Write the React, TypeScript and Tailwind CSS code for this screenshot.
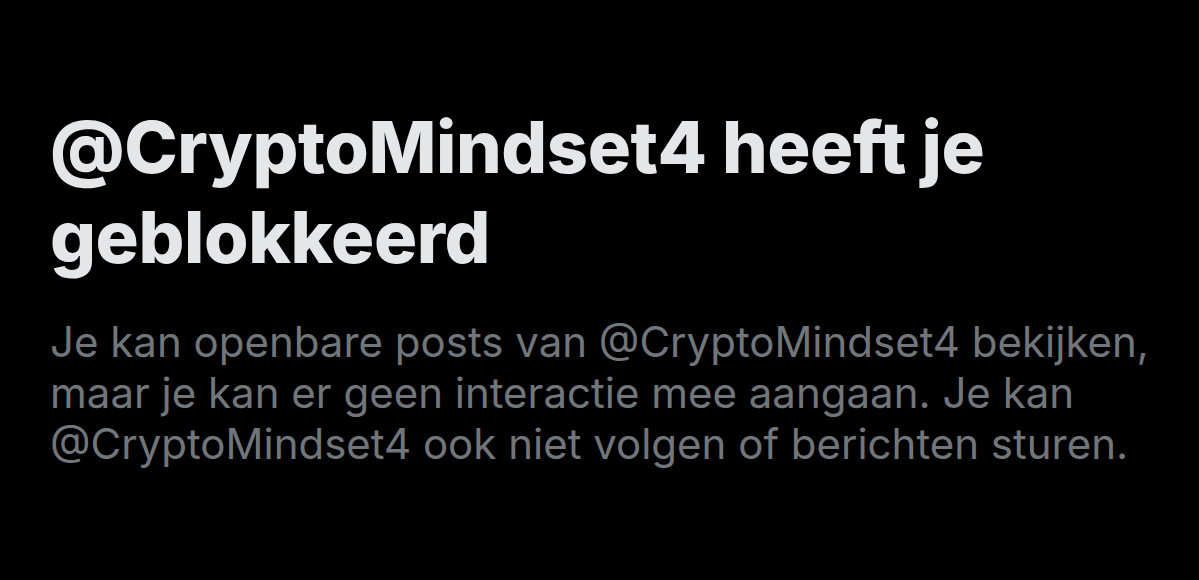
export default function App() {
  return (
    <div className="w-[1199px] h-[580px] bg-black overflow-hidden" style={{ fontFamily: 'Inter, "Liberation Sans", sans-serif' }}>
      <div className="pl-[50px] pt-[102px] w-[1170px]">
        <h1 className="text-[72px] leading-[90px] font-extrabold text-[#e4e6e7] tracking-[-0.4px]">
          @CryptoMindset4 heeft je geblokkeerd
        </h1>
        <p className="mt-[34px] text-[42px] leading-[51px] text-[#71767b]">
          Je kan openbare posts van @CryptoMindset4 bekijken, maar je kan er geen interactie mee aangaan. Je kan @CryptoMindset4 ook niet volgen of berichten sturen.
        </p>
      </div>
    </div>
  );
}
